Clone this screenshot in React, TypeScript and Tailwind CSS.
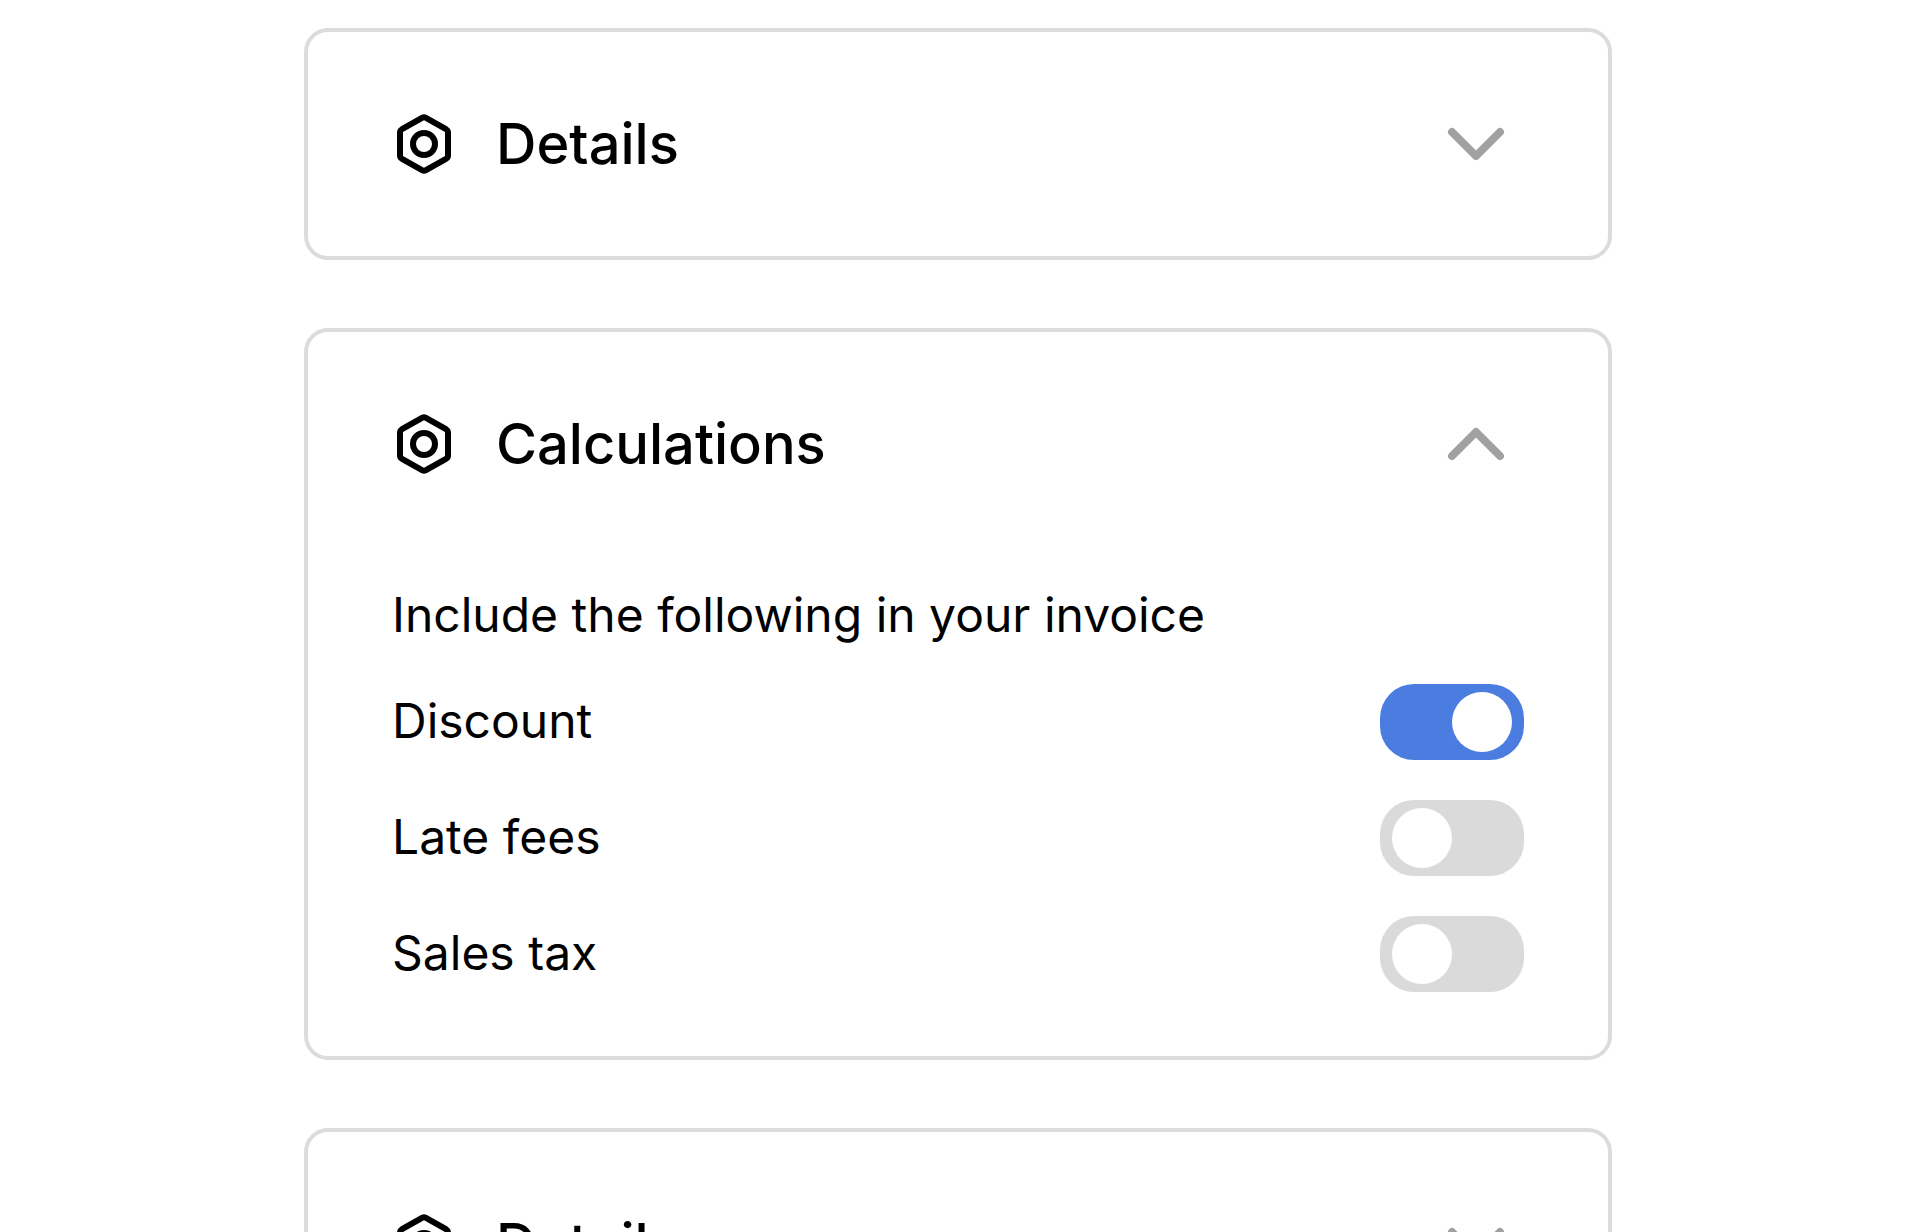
import React, { useState } from "react";

type Option = {
  id: string;
  label: string;
  on: boolean;
};

type PanelProps = {
  id: string;
  title: string;
  defaultOpen?: boolean;
  children?: React.ReactNode;
};

const OPTIONS: Option[] = [
  { id: "discount", label: "Discount", on: true },
  { id: "late-fees", label: "Late fees", on: false },
  { id: "sales-tax", label: "Sales tax", on: false },
];

const NutIcon: React.FC = () => (
  <svg viewBox="0 0 64 64" className="size-16 shrink-0" fill="none" stroke="currentColor" strokeWidth="6" strokeLinejoin="round" aria-hidden="true">
    <path d="M30.5 5.7Q32 4.9 33.5 5.7L54 17.2Q56 18.4 56 20.6V43.4Q56 45.6 54 46.8L33.5 58.3Q32 59.1 30.5 58.3L10 46.8Q8 45.6 8 43.4V20.6Q8 18.4 10 17.2Z" />
    <circle cx="32" cy="32" r="11" />
  </svg>
);

const Chevron: React.FC<{ up: boolean }> = ({ up }) => (
  <svg viewBox="0 0 64 64" className="size-16 shrink-0 text-[#a1a1a1]" fill="none" stroke="currentColor" strokeWidth="8" strokeLinecap="round" strokeLinejoin="round" aria-hidden="true">
    <path d={up ? "M8 44L32 20L56 44" : "M8 20L32 44L56 20"} />
  </svg>
);

const Switch: React.FC<{ option: Option }> = ({ option }) => {
  const [on, setOn] = useState(option.on);
  return (
    <div className="flex items-center justify-between">
      <label htmlFor={option.id} className="pb-0.5 text-[48px] leading-[58px]">{option.label}</label>
      <input
        id={option.id}
        type="checkbox"
        role="switch"
        checked={on}
        onChange={(e) => setOn(e.target.checked)}
        className="flex h-[76px] w-36 shrink-0 cursor-pointer appearance-none items-center rounded-[34px] bg-[#dadada] px-3 before:size-[60px] before:rounded-full before:bg-white before:content-[''] checked:justify-end checked:bg-[#4b7de1]"
      />
    </div>
  );
};

const Panel: React.FC<PanelProps> = ({ id, title, defaultOpen = false, children }) => {
  const [open, setOpen] = useState(defaultOpen);
  return (
    <section className="rounded-3xl border-4 border-[#dbdddc] bg-white">
      <h2>
        <button
          type="button"
          aria-expanded={open}
          aria-controls={id}
          onClick={() => setOpen(!open)}
          className="flex w-full cursor-pointer items-center gap-10 py-20 pr-[100px] pl-[84px] text-left"
        >
          <NutIcon />
          <span className="flex-1 text-[56px] leading-[64px] font-medium">{title}</span>
          <Chevron up={open} />
        </button>
      </h2>
      <div id={id} hidden={!open}>{children}</div>
    </section>
  );
};

const App: React.FC = () => (
  <main className="min-h-screen bg-white px-6 py-7 font-['Inter',sans-serif] text-black">
    <div className="mx-auto flex w-full max-w-[1308px] flex-col gap-[68px]">
      <Panel id="details" title="Details" />
      <Panel id="calculations" title="Calculations" defaultOpen>
        <div className="flex flex-col gap-10 px-[84px] pt-[30px] pb-16">
          <p className="text-[48px] leading-[58px]">Include the following in your invoice</p>
          {OPTIONS.map((option) => (
            <Switch key={option.id} option={option} />
          ))}
        </div>
      </Panel>
      <Panel id="more-details" title="Details" />
    </div>
  </main>
);

export default App;
